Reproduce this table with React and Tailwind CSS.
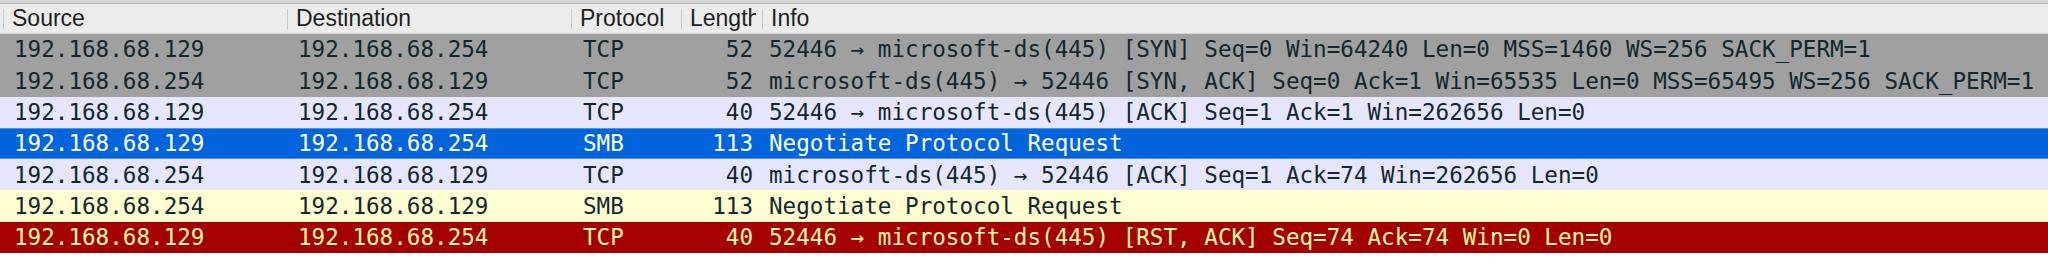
const columns = [
  { key: "source", title: "Source", width: "w-[287px]" },
  { key: "destination", title: "Destination", width: "w-[284px]" },
  { key: "protocol", title: "Protocol", width: "w-[110px]" },
  { key: "length", title: "Length", width: "w-[81px]" },
  { key: "info", title: "Info", width: "flex-1" },
];

const packets = [
  {
    source: "192.168.68.129",
    destination: "192.168.68.254",
    protocol: "TCP",
    length: 52,
    info: "52446 → microsoft-ds(445) [SYN] Seq=0 Win=64240 Len=0 MSS=1460 WS=256 SACK_PERM=1",
    row: "bg-[#a0a0a0] text-[#12272e]",
  },
  {
    source: "192.168.68.254",
    destination: "192.168.68.129",
    protocol: "TCP",
    length: 52,
    info: "microsoft-ds(445) → 52446 [SYN, ACK] Seq=0 Ack=1 Win=65535 Len=0 MSS=65495 WS=256 SACK_PERM=1",
    row: "bg-[#a0a0a0] text-[#12272e]",
  },
  {
    source: "192.168.68.129",
    destination: "192.168.68.254",
    protocol: "TCP",
    length: 40,
    info: "52446 → microsoft-ds(445) [ACK] Seq=1 Ack=1 Win=262656 Len=0",
    row: "bg-[#e7e6ff] text-[#12272e]",
  },
  {
    source: "192.168.68.129",
    destination: "192.168.68.254",
    protocol: "SMB",
    length: 113,
    info: "Negotiate Protocol Request",
    row: "bg-[#0064dc] text-white border-y border-[#4f95e6]",
  },
  {
    source: "192.168.68.254",
    destination: "192.168.68.129",
    protocol: "TCP",
    length: 40,
    info: "microsoft-ds(445) → 52446 [ACK] Seq=1 Ack=74 Win=262656 Len=0",
    row: "bg-[#e7e6ff] text-[#12272e]",
  },
  {
    source: "192.168.68.254",
    destination: "192.168.68.129",
    protocol: "SMB",
    length: 113,
    info: "Negotiate Protocol Request",
    row: "bg-[#fefed0] text-[#12272e]",
  },
  {
    source: "192.168.68.129",
    destination: "192.168.68.254",
    protocol: "TCP",
    length: 40,
    info: "52446 → microsoft-ds(445) [RST, ACK] Seq=74 Ack=74 Win=0 Len=0",
    row: "bg-[#a40000] text-[#fffc9c]",
  },
];

export default function App() {
  return (
    <div className="w-[2048px] h-[262px] bg-white overflow-hidden">
      <div className="h-[4px] bg-[#d6d6d6] border-b border-[#bcbcbc]" />

      {/* column headers */}
      <div className="flex h-[30px] bg-[#ececec] border-b border-[#d3d3d3] text-[23px] text-[#1e1e1e] font-['Liberation_Sans',sans-serif]">
        {columns.map((col, i) => (
          <div key={col.key} className={`${col.width} flex items-center whitespace-nowrap`}>
            {i === 0 && <div className="w-[3px]" />}
            <div className="w-px h-[20px] bg-[#c6c6c6] shrink-0" />
            {col.key === "length" ? (
              <span className="ml-[8px] w-[66px] overflow-x-clip leading-normal">{col.title}</span>
            ) : (
              <span className="ml-[8px] leading-normal">{col.title}</span>
            )}
          </div>
        ))}
      </div>

      {/* packet rows */}
      <div className="font-['DejaVu_Sans_Mono',monospace] text-[22.6px] leading-none">
        {packets.map((p, i) => (
          <div key={i} className={`flex items-center h-[31.3px] whitespace-nowrap ${p.row}`}>
            <div className="w-[287px] pl-[14px]">{p.source}</div>
            <div className="w-[284px] pl-[11px]">{p.destination}</div>
            <div className="w-[110px] pl-[12px]">{p.protocol}</div>
            <div className="w-[81px] pr-[9px] text-right">{p.length}</div>
            <div className="flex-1 pl-[7px]">{p.info}</div>
          </div>
        ))}
      </div>
    </div>
  );
}
